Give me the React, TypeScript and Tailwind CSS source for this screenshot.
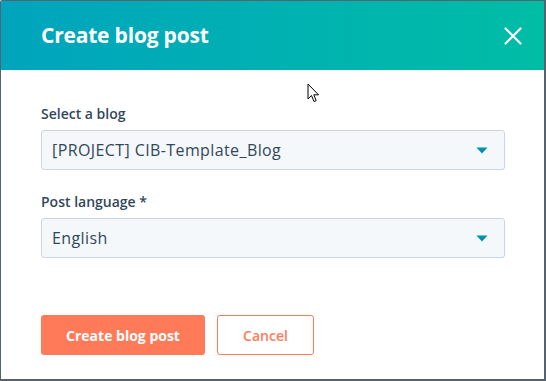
import React from "react"

const font = { fontFamily: '"Open Sans", "Noto Sans", Arial, sans-serif' }

function Caret() {
  return (
    <svg width="12" height="7" viewBox="0 0 12 7" className="shrink-0">
      <path d="M0.5 0.5 L11.5 0.5 L6 6.5 Z" fill="#0091ae" />
    </svg>
  )
}

function Select({ value }: { value: string }) {
  return (
    <div className="flex h-10 w-[464px] items-center justify-between rounded-[3px] border border-[#cbd6e2] bg-[#f5f8fa] pl-[10px] pr-[16px]">
      <span className="text-[16px] tracking-[0.4px] text-[#33475b]">{value}</span>
      <Caret />
    </div>
  )
}

export default function App() {
  return (
    <div
      className="relative flex h-[381px] w-[546px] flex-col overflow-hidden rounded-tl-[2px] border-t border-r-2 border-b-2 border-l border-[#56626d] bg-white"
      style={font}
    >
      <div className="flex h-[69px] shrink-0 items-center justify-between bg-gradient-to-r from-[#00a4bd] to-[#00bda5] pl-[40px] pr-[22px]">
        <h1 className="text-[21px] font-bold tracking-[-0.2px] text-white">Create blog post</h1>
        <svg width="18" height="18" viewBox="0 0 18 18">
          <path d="M1.5 1.5 L16.5 16.5 M16.5 1.5 L1.5 16.5" stroke="white" strokeWidth="2.2" strokeLinecap="round" />
        </svg>
      </div>

      <div className="flex flex-col pl-[40px] pt-[34px]">
        <label className="mb-1.5 text-[14px] leading-5 font-semibold text-[#33475b]">Select a blog</label>
        <Select value="[PROJECT] CIB-Template_Blog" />

        <label className="mt-[22px] mb-1.5 text-[14px] leading-5 font-semibold text-[#33475b]">Post language *</label>
        <Select value="English" />

        <div className="mt-[57px] flex gap-3">
          <button className="flex h-10 w-[164px] items-center justify-center rounded-[3px] bg-[#ff7a59] text-[14px] font-bold text-white">
            Create blog post
          </button>
          <button className="flex h-10 w-[97px] items-center justify-center rounded-[3px] border border-[#ff7a59] bg-white text-[14px] font-semibold text-[#ff7a59]">
            Cancel
          </button>
        </div>
      </div>

      {/* mouse pointer captured in the screenshot */}
      <svg className="absolute left-[306px] top-[82px]" width="13" height="20" viewBox="0 0 13 20">
        <path
          d="M1 1 L1 16 L4.5 12.5 L7 18.5 L9.2 17.6 L6.8 11.8 L11.5 11.8 Z"
          fill="white"
          stroke="black"
          strokeWidth="1"
          strokeLinejoin="round"
        />
      </svg>
    </div>
  )
}
